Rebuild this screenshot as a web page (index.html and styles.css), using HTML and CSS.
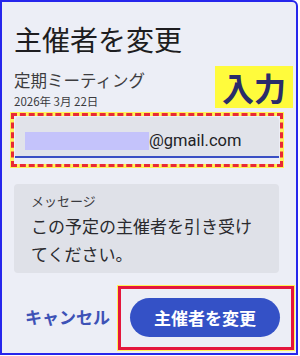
FILE: index.html
```html
<!DOCTYPE html>
<html lang="ja">
<head>
<meta charset="utf-8">
<link rel="stylesheet" href="styles.css">
</head>
<body>
<div class="frame">
  <h1 class="title">主催者を変更</h1>
  <div class="event">
    <div class="event-name">定期ミーティング</div>
    <div class="event-date">2026年 3月 22日</div>
  </div>
  <div class="badge">入力</div>
  <div class="mark-dashed">
    <div class="field">
      <span class="redact"></span><span class="email">@gmail.com</span>
    </div>
  </div>
  <div class="message">
    <div class="message-label">メッセージ</div>
    <div class="message-text">この予定の主催者を引き受けてください。</div>
  </div>
  <div class="actions">
    <span class="cancel">キャンセル</span>
    <div class="mark-solid">
      <span class="primary">主催者を変更</span>
    </div>
  </div>
</div>
</body>
</html>
```

FILE: styles.css
```css
* { box-sizing: border-box; }
html, body { margin: 0; padding: 0; background: #ffffff; }
body {
  font-family: "Noto Sans CJK JP", "Noto Sans", sans-serif;
  width: 300px;
  height: 356px;
  overflow: hidden;
}
.frame {
  position: relative;
  width: 298px;
  height: 355px;
  border: 2px solid #2626ec;
  border-top-right-radius: 6px;
  background: #eceef6;
  padding: 20px 17px 0 12px;
  display: flex;
  flex-direction: column;
}
.title {
  margin: 0;
  font-size: 28px;
  line-height: 34px;
  font-weight: 400;
  color: #1d1d20;
}
.event { margin-top: 16px; }
.event-name {
  font-size: 16.5px;
  line-height: 17px;
  color: #3d3d40;
}
.event-date {
  margin-top: 5px;
  font-size: 11.5px;
  line-height: 14px;
  color: #3a3a3d;
}
.badge {
  position: absolute;
  left: 213px;
  top: 64px;
  width: 78px;
  height: 42px;
  background: #fffb3c;
  color: #2a2c6a;
  font-size: 32px;
  font-weight: 700;
  line-height: 42px;
  text-align: center;
}
.mark-dashed {
  margin: 5px -4px 0 -3px;
  border: 3px dashed #e82a36;
  background: linear-gradient(#eceef6, #eceef6) padding-box, #fff35a border-box;
  box-shadow: 0 0 0 1px #fff35a;
  padding: 1px 1px 6px 1px;
}
.field {
  height: 41px;
  background: #e1e3ea;
  border-bottom: 2px solid #3a4fc4;
  border-radius: 4px 4px 0 0;
  display: flex;
  align-items: flex-start;
  padding: 15px 10px 0;
}
.redact {
  width: 124px;
  height: 18px;
  background: #c4c3fb;
}
.email {
  font-family: Roboto, "Noto Sans", sans-serif;
  font-size: 16.5px;
  line-height: 18px;
  color: #222226;
}
.message {
  margin-top: 17px;
  background: #dfe1e8;
  border-radius: 4px;
  padding: 9px 20px 5px 17px;
}
.message-label {
  font-size: 13px;
  line-height: 16px;
  color: #3a3a3e;
}
.message-text {
  margin-top: 3px;
  font-size: 17px;
  line-height: 28px;
  color: #2a2a2e;
}
.actions {
  margin: 13px -15px 0 0;
  display: flex;
  justify-content: flex-end;
  align-items: center;
  gap: 8px;
}
.cancel {
  font-size: 17px;
  font-weight: 700;
  color: #3d52b6;
  line-height: 20px;
  margin-top: -3px;
}
.mark-solid {
  border: 3px solid #e4163c;
  box-shadow: 0 0 0 1px #fff35a;
  padding: 9px 11px 10px 9px;
}
.primary {
  display: flex;
  align-items: center;
  justify-content: center;
  width: 150px;
  height: 39px;
  border-radius: 20px;
  background: #3451c6;
  color: #ffffff;
  font-size: 17px;
  font-weight: 700;
}
```
